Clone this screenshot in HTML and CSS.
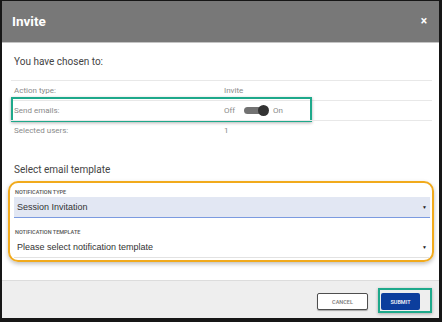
FILE: index.html
```html
<!DOCTYPE html>
<html lang="en">
<head>
  <meta charset="UTF-8" />
  <meta name="viewport" content="width=device-width, initial-scale=1.0"/>
  <title>Invite</title>
  <link rel="stylesheet" href="styles.css">
</head>
<body>
  <div class="modal">
    <header class="modal-header">
      <h1>Invite</h1>
      <button class="close-btn" aria-label="Close">×</button>
    </header>

    <main class="modal-body">
      <h2 class="section-title">You have chosen to:</h2>
      <ul class="summary">
        <li>
          <span class="label">Action type:</span>
          <span class="value">Invite</span>
        </li>
        <li class="marked">
          <span class="label">Send emails:</span>
          <span class="value">
            Off
            <span class="switch"><span class="knob"></span></span>
            On
          </span>
          <span class="callout teal"></span>
        </li>
        <li>
          <span class="label">Selected users:</span>
          <span class="value">1</span>
        </li>
      </ul>

      <h2 class="section-title template-title">Select email template</h2>
      <div class="template-box">
        <div class="field">
          <label class="field-label">Notification type</label>
          <div class="select filled">
            <span>Session Invitation</span>
            <span class="caret">▼</span>
          </div>
        </div>
        <div class="field">
          <label class="field-label">Notification template</label>
          <div class="select">
            <span>Please select notification template</span>
            <span class="caret">▼</span>
          </div>
        </div>
      </div>
    </main>

    <footer class="modal-footer">
      <button class="btn cancel-btn">Cancel</button>
      <div class="submit-wrap">
        <button class="btn submit-btn">Submit</button>
        <span class="callout teal"></span>
      </div>
    </footer>
  </div>
</body>
</html>
```

FILE: styles.css
```css
* { box-sizing: border-box; margin: 0; padding: 0; }
html, body { height: 100%; }
body {
  font-family: Roboto, 'Liberation Sans', Arial, sans-serif;
  background: #161616;
  padding: 1px 3px 4px 2px;
  color: #444;
}
.modal {
  height: 100%;
  display: flex;
  flex-direction: column;
  background: #fff;
}

/* header */
.modal-header {
  height: 42px;
  background: #787878;
  border-bottom: 1px solid #c4c4c4;
  display: flex;
  align-items: center;
  justify-content: space-between;
  padding: 0 12px 2px 10px;
}
.modal-header h1 {
  font-size: 13.5px;
  font-weight: 700;
  color: #fff;
}
.close-btn {
  background: none;
  border: none;
  color: #fff;
  font-family: inherit;
  font-size: 12px;
  font-weight: 700;
  line-height: 1;
  cursor: pointer;
}

/* body */
.modal-body {
  flex: 1;
  padding: 9px 5px 0 6px;
}
.section-title {
  font-size: 10px;
  font-weight: 400;
  color: #444;
  line-height: 20px;
  padding-left: 6px;
  margin-bottom: 8px;
}
.template-title {
  margin: 20px 0 1px 0;
}
.summary {
  list-style: none;
  margin: 0 2px 0 3px;
}
.summary li {
  display: flex;
  align-items: center;
  height: 20px;
  border-top: 1px solid #e8e8e8;
  font-size: 8px;
  color: #8a8a8a;
  position: relative;
}
.summary .label {
  flex: 0 0 213px;
  padding-left: 3px;
}
.summary .value {
  display: flex;
  align-items: center;
}
.switch {
  display: inline-block;
  position: relative;
  width: 24px;
  height: 7px;
  border-radius: 4px;
  background: #727272;
  margin: 0 5px 0 9px;
}
.knob {
  position: absolute;
  right: -1px;
  top: -2px;
  width: 11px;
  height: 11px;
  border-radius: 50%;
  background: #333;
}

/* annotation frames */
.callout {
  position: absolute;
  border: 2px solid #1ea98b;
  box-shadow: 0 1px 3px rgba(0,0,0,0.3);
  pointer-events: none;
}
.marked .callout {
  left: 0;
  top: -4px;
  width: 301px;
  height: 25px;
}

/* template box */
.template-box {
  border: 2px solid #f1aa1c;
  border-radius: 10px;
  box-shadow: 0 2px 4px rgba(0,0,0,0.25);
  padding: 4px 2px 2px 4px;
}
.field + .field { margin-top: 9px; }
.field-label {
  display: block;
  font-size: 5.5px;
  font-weight: 500;
  text-transform: uppercase;
  color: #555;
  line-height: 10px;
  padding-left: 1px;
}
.select {
  height: 21px;
  display: flex;
  align-items: center;
  justify-content: space-between;
  padding: 0 3px 0 3px;
  font-family: 'Liberation Sans', Arial, sans-serif;
  font-size: 9px;
  color: #333;
  border-bottom: 1px solid #e2e2e2;
}
.select.filled {
  background: #e2e7f3;
  border-bottom: 1px solid #7b9be0;
}
.caret {
  font-size: 5px;
  color: #222;
}

/* footer */
.modal-footer {
  height: 38px;
  background: #eeeeee;
  border-top: 1px solid #dcdcdc;
  display: flex;
  justify-content: flex-end;
  align-items: flex-start;
  gap: 13px;
  padding: 12px 19px 0 0;
}
.btn {
  height: 17px;
  font-family: inherit;
  font-size: 5.5px;
  font-weight: 500;
  text-transform: uppercase;
  border-radius: 2px;
  cursor: pointer;
}
.cancel-btn {
  width: 51px;
  background: #fff;
  color: #777;
  border: 1px solid #4e4e4e;
  box-shadow: 0 1px 1px rgba(0,0,0,0.3);
}
.submit-wrap {
  position: relative;
}
.submit-btn {
  width: 39px;
  display: block;
  background: #0c3e9d;
  color: #fff;
  border: none;
}
.submit-wrap .callout {
  left: -3px;
  top: -5px;
  right: -12px;
  bottom: -3px;
}
```
